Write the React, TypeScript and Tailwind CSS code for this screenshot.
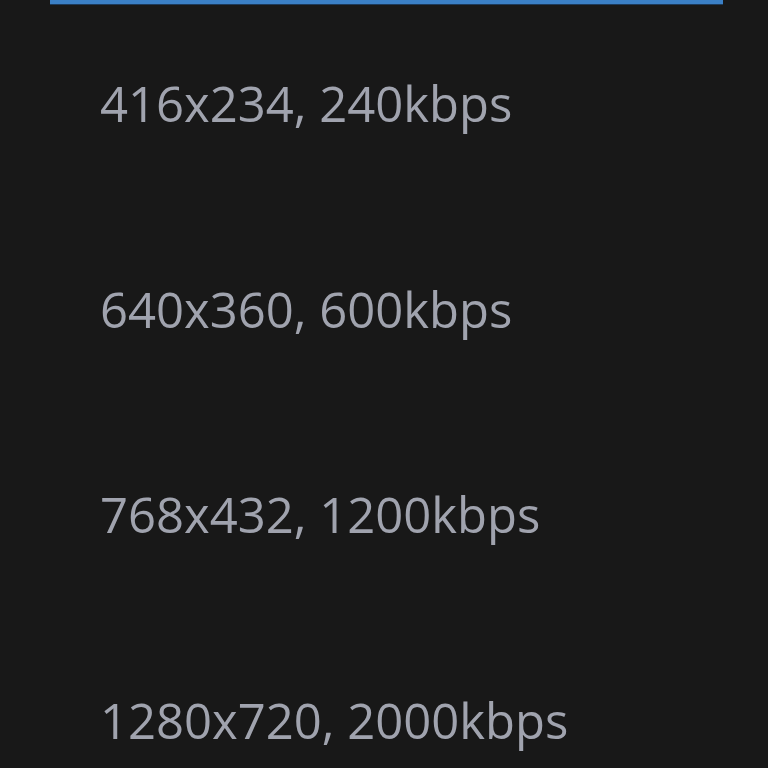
const renditions = [
  "416x234, 240kbps",
  "640x360, 600kbps",
  "768x432, 1200kbps",
  "1280x720, 2000kbps",
];

export default function App() {
  return (
    <div className="w-[768px] h-[768px] overflow-hidden bg-[#181818]">
      <div className="ml-[50px] w-[673px] h-[5px] bg-[#3b80c6] border-b border-[#1d3a5a]" />
      <div className="flex flex-col pt-[74px] pl-[100px]">
        {renditions.map((r) => (
          <div
            key={r}
            className="h-[205.5px] text-[49px] leading-none text-[#a0a3ae]"
            style={{ fontFamily: '"Open Sans", "Noto Sans", sans-serif' }}
          >
            {r}
          </div>
        ))}
      </div>
    </div>
  );
}
